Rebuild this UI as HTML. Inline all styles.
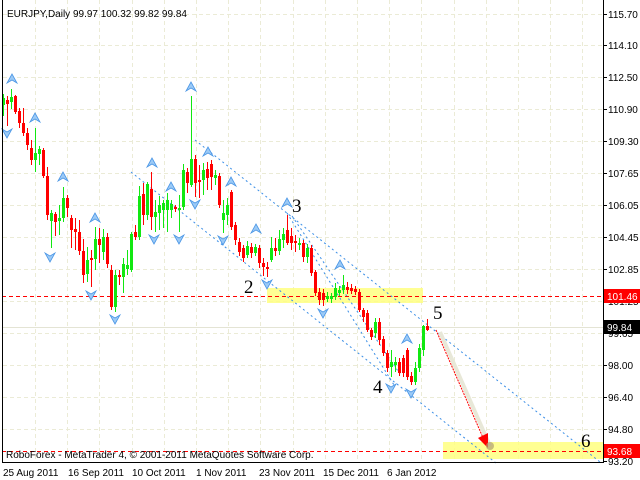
<!DOCTYPE html>
<html><head><meta charset="utf-8"><style>
html,body{margin:0;padding:0;background:#fff;width:640px;height:480px;overflow:hidden}
svg{display:block}
text{font-family:"Liberation Sans",sans-serif;font-size:10px;fill:#000}
.n{font-family:"Liberation Serif",serif;font-size:19px}
</style></head><body>
<svg id="s" width="640" height="480" xmlns="http://www.w3.org/2000/svg">
<rect width="640" height="480" fill="#fff"/>
<g id="grid" stroke="#ebebd6" stroke-width="1" stroke-dasharray="4,3"></g>
<rect x="267" y="288" width="156" height="15" fill="#ffff80" opacity="0.85"/>
<rect x="443" y="442" width="160" height="17" fill="#ffff80" opacity="0.85"/>
<line x1="2" y1="327.5" x2="603" y2="327.5" stroke="#e4e4d4"/>
<g stroke="#3a8ee6" stroke-width="1" stroke-dasharray="2,3" fill="none">
<line x1="195" y1="140" x2="600" y2="462"/>
<line x1="131" y1="172" x2="496" y2="463"/>
<line x1="287" y1="213" x2="394" y2="385"/>
<line x1="292" y1="216" x2="400" y2="374"/>
</g>
<line x1="2" y1="296.5" x2="603" y2="296.5" stroke="#f00" stroke-dasharray="4,3"/>
<line x1="2" y1="451.5" x2="603" y2="451.5" stroke="#f00" stroke-dasharray="4,3"/>
<g id="c"></g>
<g id="ar"></g>
<line x1="440" y1="332" x2="490" y2="446" stroke="#e8e8d8" stroke-width="4"/>
<line x1="436" y1="330" x2="484" y2="440" stroke="#f00" stroke-dasharray="2,1"/>
<polygon points="478,438 488,433 488,448" fill="#f00"/>
<circle cx="490" cy="446" r="4" fill="#b0a070" opacity="0.7"/>
<text class="n" x="244" y="293">2</text>
<text class="n" x="292" y="212">3</text>
<text class="n" x="373" y="393">4</text>
<text class="n" x="433" y="319">5</text>
<text class="n" x="581" y="447">6</text>
<line x1="2.5" y1="0" x2="2.5" y2="462" stroke="#000"/>
<line x1="603.5" y1="0" x2="603.5" y2="463" stroke="#000"/>
<line x1="2" y1="462.5" x2="604" y2="462.5" stroke="#000"/>
<g id="ax"></g>
<text x="7" y="17">EURJPY,Daily  99.97 100.32 99.82 99.84</text>
<text x="6" y="458">RoboForex - MetaTrader 4, © 2001-2011 MetaQuotes Software Corp.</text>
<text x="3" y="476">25 Aug 2011</text>
<text x="68" y="476">16 Sep 2011</text>
<text x="132" y="476">10 Oct 2011</text>
<text x="196" y="476">1 Nov 2011</text>
<text x="259" y="476">23 Nov 2011</text>
<text x="323" y="476">15 Dec 2011</text>
<text x="387" y="476">6 Jan 2012</text>
</svg>
<script>
var NS="http://www.w3.org/2000/svg",g=document.getElementById('grid'),c=document.getElementById('c'),ar=document.getElementById('ar'),ax=document.getElementById('ax');
function el(p,t,a){var e=document.createElementNS(NS,t);for(var k in a)e.setAttribute(k,a[k]);p.appendChild(e);return e;}
var hy=[14,45,77,109,141,173,205,237,269,301,333,365,397,429];
hy.forEach(function(y){el(g,'line',{x1:3,y1:y+.5,x2:603,y2:y+.5});});
for(var x=35;x<603;x+=32.2){var xx=Math.round(x)+.5;el(g,'line',{x1:xx,y1:0,x2:xx,y2:462});}
var labs=[[14,'115.70'],[45,'114.10'],[77,'112.50'],[109,'110.90'],[141,'109.30'],[173,'107.65'],[205,'106.05'],[237,'104.45'],[269,'102.85'],[301,'101.25'],[333,'99.65'],[365,'98.00'],[397,'96.40'],[429,'94.80'],[461,'93.20']];
labs.forEach(function(l){el(ax,'line',{x1:603,y1:l[0]+.5,x2:607,y2:l[0]+.5,stroke:'#000'});var t=el(ax,'text',{x:608,y:l[0]+4});t.textContent=l[1];});
[[296,'101.46','#f00','#fff'],[327,'99.84','#000','#fff'],[451,'93.68','#f00','#fff']].forEach(function(b){el(ax,'rect',{x:604,y:b[0]-7,width:36,height:14,fill:b[2]});var t=el(ax,'text',{x:607,y:b[0]+4});t.style.fill=b[3];t.textContent=b[1];});
var d=`3 g 98 105 94 116
7 r 100 104 96 126
11 g 97 102 89 109
15 r 96 112 95 114
19 r 111 123 108 128
23 r 123 133 108 136
27 r 133 145 128 150
31 r 148 160 140 165
35 g 153 160 128 172
39 g 149 154 146 165
43 r 150 176 148 178
47 r 176 215 167 220
51 g 213 221 210 248
55 r 214 222 212 236
59 g 218 221 205 235
63 g 198 218 187 222
67 r 198 208 195 217
71 r 218 230 215 248
75 r 229 232 218 250
79 r 232 251 220 255
83 r 251 275 239 283
87 g 260 274 247 282
91 r 258 260 250 287
95 g 239 259 227 270
99 r 239 245 228 263
103 g 237 252 229 260
107 r 237 264 233 268
111 r 270 307 265 310
115 g 275 307 270 312
119 r 275 277 270 285
123 g 264 277 258 293
127 g 265 269 250 275
131 g 234 270 232 272
135 r 232 237 225 240
139 g 196 237 186 240
143 r 194 215 183 225
147 g 184 215 182 220
151 r 189 217 172 230
155 g 212 217 200 232
159 g 205 213 196 230
163 g 203 210 200 228
167 g 200 210 193 232
171 g 204 210 200 218
175 r 207 209 205 212
179 g 208 210 195 232
183 g 170 207 164 210
187 r 172 183 168 193
191 g 159 185 96 187
195 r 159 183 155 197
199 r 180 181 165 198
203 g 170 180 163 195
207 r 169 178 162 190
211 r 164 177 160 190
215 g 175 178 170 185
219 r 176 205 173 208
223 g 213 220 200 233
227 g 205 215 198 225
231 r 192 227 190 230
235 r 225 240 222 245
239 r 242 252 238 256
243 r 248 258 245 262
247 g 246 255 241 258
251 r 247 253 243 258
255 g 247 253 244 256
259 r 248 263 245 268
263 r 263 267 258 276
267 r 267 268 262 277
271 g 248 260 237 262
275 r 248 251 238 256
279 g 239 251 230 255
283 g 234 240 228 248
287 r 230 243 215 245
291 r 236 243 228 250
295 r 241 243 235 252
299 g 243 245 238 250
303 r 243 257 240 262
307 g 248 257 244 263
311 r 248 273 245 276
315 r 272 293 270 296
319 r 292 300 288 305
323 r 293 300 289 306
327 g 296 299 292 302
331 g 296 299 293 303
335 g 288 297 283 300
339 g 290 293 286 296
343 g 285 290 275 294
347 r 287 290 282 294
351 r 288 291 284 294
355 r 289 292 286 295
359 r 292 310 289 312
363 r 310 317 308 322
367 r 313 330 310 332
371 r 330 337 328 340
375 g 322 333 318 338
379 r 322 340 318 345
383 r 339 353 336 356
387 r 353 368 350 372
391 g 362 367 350 377
395 g 362 365 357 372
399 r 362 373 358 376
403 r 358 373 355 377
407 r 350 377 348 380
411 r 376 382 372 385
415 g 368 382 362 385
419 g 348 368 344 372
423 g 326 350 325 356
427 r 326 330 319 331`;
d.split('\n').forEach(function(l){var p=l.trim().split(/\s+/),x=+p[0],col=p[1]=='g'?'#11e811':'#ff0000',bt=+p[2],bb=+p[3],wt=+p[4],wb=+p[5];
el(c,'rect',{x:x,y:wt,width:1,height:wb-wt,fill:col});
el(c,'rect',{x:x-1,y:bt,width:3,height:Math.max(2,bb-bt),fill:col});});
var up=[[12,79],[35,118],[63,177],[95,218],[152,163],[171,187],[191,87],[208,152],[231,182],[256,229],[287,203],[340,265],[407,339]];
var dn=[[7,133],[50,257],[91,295],[115,319],[154,239],[179,239],[195,204],[223,240],[267,284],[323,313],[391,388],[411,393]];
up.forEach(function(a){var x=a[0],y=a[1];el(ar,'polygon',{points:(x)+','+(y-5)+' '+(x-5)+','+(y+4)+' '+x+','+(y+1)+' '+(x+5)+','+(y+4),fill:'#9ccaf6',stroke:'#4a96e6','stroke-width':0.8});});
dn.forEach(function(a){var x=a[0],y=a[1];el(ar,'polygon',{points:(x)+','+(y+5)+' '+(x-5)+','+(y-4)+' '+x+','+(y-1)+' '+(x+5)+','+(y-4),fill:'#9ccaf6',stroke:'#4a96e6','stroke-width':0.8});});
</script>
</body></html>
